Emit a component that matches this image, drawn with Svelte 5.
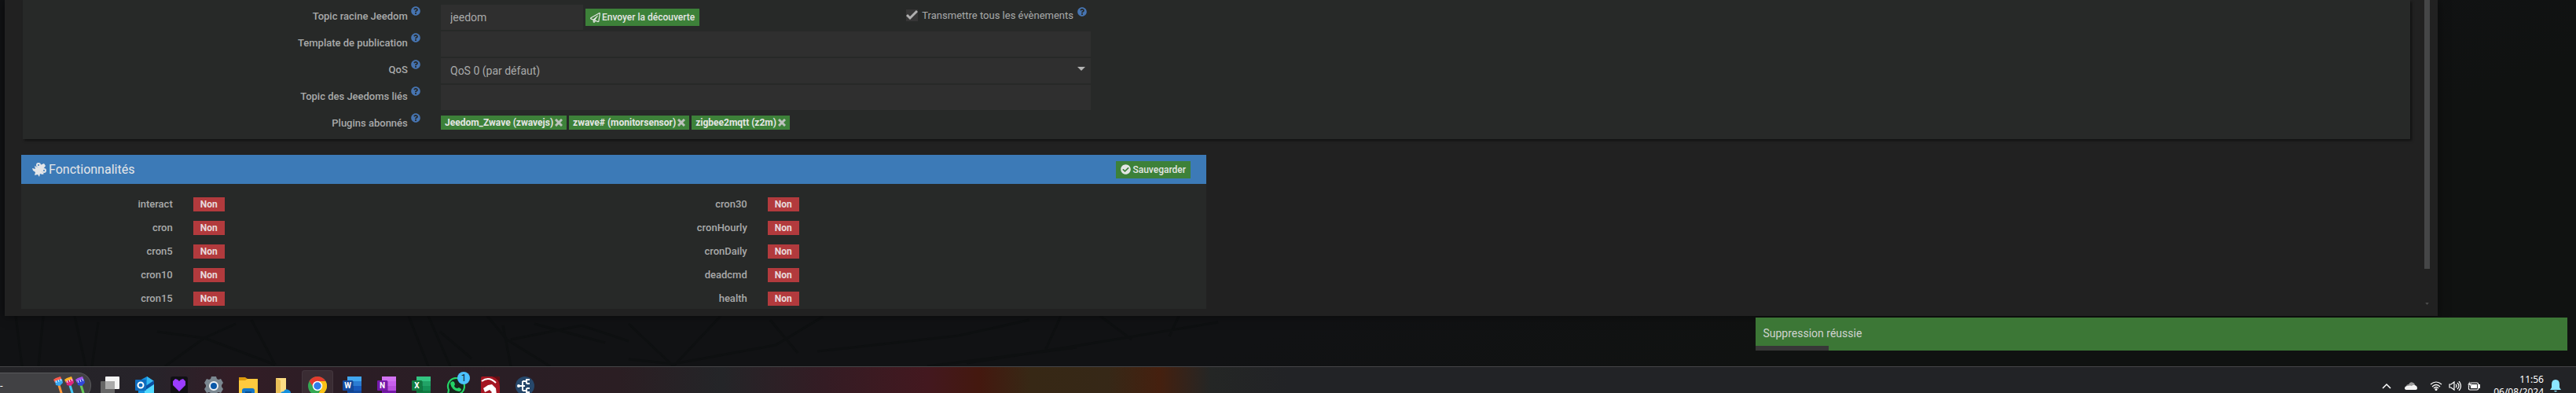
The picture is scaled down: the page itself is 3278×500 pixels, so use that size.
<script>
     let topic = $state('jeedom');
     let template = $state('');
     let qos = $state('0');
     let linkedTopic = $state('');
     let sendAll = $state(true);
     let plugins = $state(['Jeedom_Zwave (zwavejs)', 'zwave# (monitorsensor)', 'zigbee2mqtt (z2m)']);

     // One list per column of the "Fonctionnalités" panel.
     const features = [
          ['interact', 'cron', 'cron5', 'cron10', 'cron15'],
          ['cron30', 'cronHourly', 'cronDaily', 'deadcmd', 'health']
     ];

     const toastProgress = 9;

     function removePlugin(name) {
          plugins = plugins.filter((p) => p !== name);
     }
</script>

{#snippet help()}
     <svg class="help" viewBox="0 0 512 512" aria-hidden="true">
          <path d="M504 256c0 136.997-111.043 248-248 248S8 392.997 8 256C8 119.083 119.043 8 256 8s248 111.083 248 248zM262.655 90c-54.497 0-89.255 22.957-116.549 63.758-3.536 5.286-2.353 12.415 2.715 16.258l34.699 26.31c5.205 3.947 12.621 3.008 16.665-2.122 17.864-22.658 30.113-35.797 57.303-35.797 20.429 0 45.698 13.148 45.698 32.958 0 14.976-12.363 22.667-32.534 33.976C247.128 238.528 216 254.941 216 296v4c0 6.627 5.373 12 12 12h56c6.627 0 12-5.373 12-12v-1.333c0-28.462 83.186-29.647 83.186-106.667 0-58.002-60.165-102-116.531-102zM256 338c-25.365 0-46 20.635-46 46 0 25.364 20.635 46 46 46s46-20.636 46-46c0-25.365-20.635-46-46-46z" />
     </svg>
{/snippet}

{#snippet office(letter, base, dark, mid, light)}
     <svg viewBox="0 0 24 24" aria-hidden="true">
          <rect x="6" width="18" height="24" fill={base} />
          <rect x="6" width="18" height="6" fill={light} />
          <rect x="6" y="6" width="18" height="6" fill={mid} />
          <rect x="6" y="18" width="18" height="6" fill={dark} />
          <rect x="7" y="6" width="7" height="13" fill="#000" opacity="0.2" />
          <rect y="5" width="13" height="13" rx="1" fill={dark} />
          <text x="6.5" y="15" text-anchor="middle" font-size="10" font-weight="700" fill="#fff">{letter}</text>
     </svg>
{/snippet}

<div class="page">
     <main class="modal">
          <div class="content">
               <form class="config" onsubmit={(e) => e.preventDefault()}>
                    <div class="row">
                         <label class="name" for="topic">Topic racine Jeedom {@render help()}</label>
                         <div class="control">
                              <input id="topic" class="field short" type="text" bind:value={topic} />
                              <button class="btn" type="button">
                                   <svg class="icon" viewBox="0 0 512 512" aria-hidden="true">
                                        <path d="M440 6.500L24 246.400c-34.400 19.900-31.100 70.800 5.700 85.900L144 379.600V464c0 46.400 59.200 65.500 86.600 28.600l43.800-59.100 111.900 46.200c5.900 2.400 12.100 3.600 18.300 3.600 8.200 0 16.300-2.100 23.600-6.200 12.800-7.200 21.600-20 23.900-34.500l59.400-387.200c6.100-40.100-36.900-68.800-71.500-48.900zM192 464v-64.600l36.600 15.100L192 464zm212.600-28.700l-153.800-63.500L391 169.500c10.700-15.500-9.500-33.500-23.700-21.200L155.800 332.600 48 288 464 48l-59.400 387.300z" />
                                   </svg>
                                   Envoyer la découverte
                              </button>
                              <label class="check">
                                   <input type="checkbox" bind:checked={sendAll} />
                                   Transmettre tous les évènements {@render help()}
                              </label>
                         </div>
                    </div>
                    <div class="row">
                         <label class="name" for="template">Template de publication {@render help()}</label>
                         <div class="control">
                              <input id="template" class="field" type="text" bind:value={template} />
                         </div>
                    </div>
                    <div class="row">
                         <label class="name" for="qos">QoS {@render help()}</label>
                         <div class="control">
                              <select id="qos" class="field" bind:value={qos}>
                                   <option value="0">QoS 0 (par défaut)</option>
                                   <option value="1">QoS 1</option>
                                   <option value="2">QoS 2</option>
                              </select>
                         </div>
                    </div>
                    <div class="row">
                         <label class="name" for="linked">Topic des Jeedoms liés {@render help()}</label>
                         <div class="control">
                              <input id="linked" class="field" type="text" bind:value={linkedTopic} />
                         </div>
                    </div>
                    <div class="row">
                         <span class="name">Plugins abonnés {@render help()}</span>
                         <div class="control tags">
                              {#each plugins as plugin (plugin)}
                                   <span class="tag">
                                        {plugin}
                                        <button type="button" aria-label="Supprimer" onclick={() => removePlugin(plugin)}>
                                             <svg viewBox="0 0 10 10" aria-hidden="true"><path d="M1 1l8 8M9 1l-8 8" /></svg>
                                        </button>
                                   </span>
                              {/each}
                         </div>
                    </div>
               </form>

               <section class="panel">
                    <header>
                         <h3>
                              <svg class="puzzle" viewBox="0 0 18 18" aria-hidden="true">
                                   <path d="M0 7l4 1-1-4 4 2 3-3 5-2 2 3-3 4 2 1-4 2 3 3-2 1-3-1-1 4-2-3-4 1 1-4-3-2z" fill="#e4e6e8" />
                                   <circle cx="8" cy="3" r="2" />
                                   <circle cx="15" cy="10" r="2" />
                              </svg>
                              Fonctionnalités
                         </h3>
                         <button class="btn" type="button">
                              <svg class="icon" viewBox="0 0 512 512" aria-hidden="true">
                                   <path d="M504 256c0 136.967-111.033 248-248 248S8 392.967 8 256 119.033 8 256 8s248 111.033 248 248zM227.314 387.314l184-184c6.248-6.248 6.248-16.379 0-22.627l-22.627-22.627c-6.248-6.249-16.379-6.249-22.628 0L216 308.118l-70.059-70.059c-6.248-6.248-16.379-6.248-22.628 0l-22.627 22.627c-6.248 6.248-6.248 16.379 0 22.627l104 104c6.249 6.249 16.379 6.249 22.628.001z" />
                              </svg>
                              Sauvegarder
                         </button>
                    </header>
                    <div class="features">
                         {#each features as column}
                              <dl>
                                   {#each column as feature}
                                        <div class="feature">
                                             <dt>{feature}</dt>
                                             <dd><span class="badge">Non</span></dd>
                                        </div>
                                   {/each}
                              </dl>
                         {/each}
                    </div>
               </section>
          </div>
          <div class="scrollbar" aria-hidden="true">
               <div class="thumb"></div>
               <svg viewBox="0 0 6 4"><path d="M0 0h6L3 4z" /></svg>
          </div>
     </main>

     <div class="wallpaper" aria-hidden="true">
          <svg viewBox="0 0 3278 64" preserveAspectRatio="none">
               <path d="M20 0l8 64M55 0l-6 64M95 0l14 64M125 8l-8 56M200 20l60 8 40-18M210 64l50-36 90 34M320 5l30 57M520 0l25 64M545 0l28 64M560 20l40 34M620 0l25 30 55 34M640 12l10 52M650 30l90-18 60 20M680 10l90 24M800 10l57 54 60-64M800 55l57 6 130-24 60-36M980 5l35 42M1040 45l180-20 90-20M1230 60l140-22 180-30M1180 64l190-24M1350 0l-20 44M1400 0l40 30M1500 0l-12 26" />
          </svg>
     </div>

     <footer class="taskbar">
          <div class="search" aria-hidden="true">
               <span>-</span>
               <svg viewBox="0 0 42 24">
                    {#each [['#ff5b4d', '#38a7f0', '#ff9638'], ['#ffb327', '#e0257d', '#44c7f5'], ['#a457f0', '#3046d8', '#66c95a']] as [tip, band, handle], i}
                         <g transform="translate({i * 14} 0)">
                              <path d="M7 11l4 13" stroke={handle} stroke-width="3" />
                              <path d="M0 4l3-2 6-2 2 5-9 3z" fill={tip} />
                              <path d="M2 6l9-3 1 5-4 4-5-1z" fill={band} />
                              <path d="M3 5l1 3M6 4l1 3M9 3l1 3" stroke="#dff3ff" />
                         </g>
                    {/each}
               </svg>
          </div>

          <nav class="apps" aria-label="Applications">
               <button type="button" aria-label="Bureau">
                    <svg viewBox="0 0 24 24">
                         <rect x="6" width="18" height="16" rx="1" fill="#f4f4f4" />
                         <rect y="6" width="18" height="16" rx="1" fill="#666" />
                         <rect x="6" y="6" width="12" height="10" fill="#aaa" />
                    </svg>
               </button>
               <button type="button" aria-label="Outlook">
                    <svg viewBox="0 0 24 24">
                         <path d="M4 6L15 0l9 6v18H4z" fill="#1490df" />
                         <path d="M15 0l9 6-9 7z" fill="#35b8f1" />
                         <path d="M12 13L24 5v5l-10 7z" fill="#0b4fa0" />
                         <path d="M12 18l12-8v14H12z" fill="#50d9ff" />
                         <rect y="4" width="14" height="14" rx="1" fill="#0f6cbd" />
                         <circle cx="7" cy="11" r="3.500" fill="none" stroke="#fff" stroke-width="2" />
                    </svg>
               </button>
               <button type="button" aria-label="Coeur">
                    <svg viewBox="0 0 24 24">
                         <rect x="1" width="22" height="24" rx="3" fill="#111015" />
                         <path d="M12 19L4 11V6l3-3 3 1 2 2 2-2 3-1 3 3v5z" fill="#9b3cff" />
                    </svg>
               </button>
               <button type="button" aria-label="Paramètres">
                    <svg viewBox="0 0 24 24">
                         <path d="M9 0h6l1 3 2 1 3-1 3 5-2 3v2l2 3-3 5-3-1-2 1-1 3H9l-1-3-2-1-3 1-3-5 2-3v-2L0 8l3-5 3 1 2-1z" fill="#7b8790" />
                         <circle cx="12" cy="12" r="5" fill="#0a58a8" stroke="#eef2f5" stroke-width="2" />
                    </svg>
               </button>
               <button type="button" aria-label="Explorateur">
                    <svg viewBox="0 0 24 24">
                         <path d="M0 1h8l3 2v4H0z" fill="#dd9a0c" />
                         <path d="M0 5h8l3-2h13v21H0z" fill="#ffca3e" />
                         <path d="M4 24v-6q0-3 3-3h10q3 0 3 3v6z" fill="#1577c8" />
                         <path d="M8 20h8" stroke="#0b4f93" stroke-width="2" />
                    </svg>
               </button>
               <button type="button" aria-label="OneDrive">
                    <svg viewBox="0 0 24 24">
                         <path d="M3 2h13v22H3z" fill="#fbdc84" />
                         <path d="M3 2l6 3v19H3z" fill="#e9bf58" />
                         <path d="M9 24q-1-5 4-5 2-4 6-2 3 1 3 4 2 1 1 3z" fill="#1490df" />
                    </svg>
               </button>
               <button class="active" type="button" aria-label="Chrome">
                    <svg viewBox="0 0 24 24">
                         <circle cx="12" cy="12" r="12" fill="#34a853" />
                         <path d="M1.600 6A12 12 0 0 1 22.400 6H12l-5 8z" fill="#e33b2e" />
                         <path d="M12 6h10.400A12 12 0 0 1 12 24l5-9z" fill="#fbc116" />
                         <circle cx="12" cy="12" r="5.500" fill="#2f7de9" stroke="#fff" stroke-width="1.500" />
                    </svg>
               </button>
               <button type="button" aria-label="Word">{@render office('W', '#185abd', '#134a9e', '#2b7cd3', '#41a5ee')}</button>
               <button type="button" aria-label="OneNote">{@render office('N', '#b950df', '#7719aa', '#c85fee', '#d272f2')}</button>
               <button type="button" aria-label="Excel">{@render office('X', '#159257', '#107c41', '#21a366', '#33c481')}</button>
               <button class="chat" type="button" aria-label="WhatsApp">
                    <svg viewBox="0 0 24 24">
                         <path d="M2 23l1-6A10.500 10.500 0 1 1 8 22z" fill="#16251d" stroke="#25d366" stroke-width="2.200" />
                         <path d="M8 6l2 1 1 3-1 2q1 3 4 3l2-1 3 2q0 3-3 3-9-1-11-10 0-2 3-3z" fill="#25d366" />
                    </svg>
                    <span class="count">1</span>
               </button>
               <button type="button" aria-label="Dragon">
                    <svg viewBox="0 0 24 24">
                         <rect width="24" height="24" rx="2" fill="#a51622" />
                         <path d="M0 0h14q10 3 10 13v-11q0-2-2-2z" fill="#5b0e14" />
                         <path d="M1 6Q10-1 19 8" fill="none" stroke="#fff" stroke-width="2" />
                         <path d="M3 15l6-4 5-1 5 5 1 9H10l4-4-3-3-6 3z" fill="#fff" />
                    </svg>
               </button>
               <button type="button" aria-label="MQTT">
                    <svg viewBox="0 0 24 24">
                         <circle cx="12" cy="12" r="12" fill="#27486b" />
                         <path d="M4 12h8M9 6v12M9 6h4M9 18h4M14 3v6M14 15v6M14 4h4M14 9h4M14 15h4M14 20h4" fill="none" stroke="#fff" stroke-width="2" />
                         <circle cx="4" cy="12" r="2" fill="#fff" />
                    </svg>
               </button>
          </nav>

          <div class="tray">
               <svg class="chevron" viewBox="0 0 12 8" aria-hidden="true"><path d="M1 7l5-5 5 5" fill="none" stroke="#fff" stroke-width="1.500" /></svg>
               <svg class="cloud" viewBox="0 0 16 10" aria-hidden="true">
                    <path d="M2 6q0-3 3-3 2-4 6-2 2 1 2 3l-7 4H2z" fill="#999" />
                    <path d="M3 10q-3 0-3-2 0-3 4-3 3-1 5 0 2-2 4-1 3 1 3 4 0 2-2 2z" fill="#f3f3f3" />
               </svg>
               <svg class="status" viewBox="0 0 16 12" aria-hidden="true">
                    <path d="M1 4q7-6 14 0M3 7q5-5 10 0M5 9q3-3 6 0" fill="none" stroke="#fff" stroke-width="1.200" />
                    <circle cx="8" cy="10.500" r="1.500" fill="#fff" />
               </svg>
               <svg class="status" viewBox="0 0 16 12" aria-hidden="true">
                    <path d="M1 4h2l4-3v10L3 8H1zM9 4q2 2 0 4M11 2q4 4 0 8M13 0q5 6 0 12" fill="none" stroke="#fff" stroke-width="1.200" />
               </svg>
               <svg class="status" viewBox="0 0 16 12" aria-hidden="true">
                    <rect x="1.500" y="2" width="12" height="9" rx="1.500" fill="none" stroke="#fff" stroke-width="1.200" />
                    <rect x="4" y="4" width="8" height="5" fill="#fff" />
                    <path d="M14 4h2v5h-2z" fill="#fff" />
                    <path d="M3 0L0 5h3L2 8l4-5H3z" fill="#fff" stroke="#222326" stroke-width="0.500" />
               </svg>
               <div class="clock">
                    <time>11:56</time>
                    <time>06/08/2024</time>
               </div>
               <svg class="bell" viewBox="0 0 14 16" aria-hidden="true">
                    <path d="M7 0q5 0 5 6v4l2 3H0l2-3V6q0-6 5-6zM5 14h4q-2 3-4 0z" fill="#8ce6ff" />
               </svg>
          </div>
     </footer>

     <div class="toast" role="status">
          <p>Suppression réussie</p>
          <div class="progress" style={`width: ${toastProgress}%;`}></div>
     </div>
</div>

<style>
     :global(body) {
          background: #111213;
     }

     .page {
          height: 100vh;
          overflow: hidden;
          display: flex;
          flex-direction: column;

          font-family: Roboto, "Noto Sans", sans-serif;
          font-size: 13px;
          color: #a9aaaa;
          background: linear-gradient(160deg, #111214 60%, #101211 75%);
     }

     .modal {
          flex: none;
          display: flex;
          gap: 18px;
          margin: 0 176px 0 6px;
          padding: 0 10px 9px 21px;
          background: #212121;
          box-shadow: 0 0 12px rgba(0, 0, 0, 0.5);
          z-index: 1;
     }

     .content {
          flex: 1;
          min-width: 0;
     }

     .config {
          margin: 0 0 20px 2px;
          padding: 5px 0 2px;
          background: #272928;
          box-shadow: 2px 2px 3px rgba(0, 0, 0, 0.5);
     }

     .row {
          display: grid;
          grid-template-columns: 519fr 853fr 1666fr;
          align-items: center;
          min-height: 34px;
     }

     .name {
          padding-right: 13px;
          padding-bottom: 6px;
          text-align: right;
          font-weight: 500;
          line-height: 18px;
          white-space: nowrap;
     }

     .help {
          width: 12px;
          height: 12px;
          margin-left: 1px;
          vertical-align: 5px;
          fill: #4674b1;
     }

     .control {
          display: flex;
          align-items: center;
          gap: 3px;
          padding: 0 13px;
     }

     .tags {
          padding-bottom: 4px;
     }

     .field {
          box-sizing: border-box;
          width: 100%;
          height: 32px;
          padding: 0 12px;
          border: none;
          border-radius: 0;
          appearance: none;
          font: inherit;
          font-size: 14px;
          color: #a9aaaa;
          background-color: #2f2f2f;
     }

     select.field {
          background-image: url("data:image/svg+xml,%3Csvg xmlns='http://www.w3.org/2000/svg' viewBox='0 0 10 5'%3E%3Cpath d='M0 0h10L5 5z' fill='%23b4b4b4'/%3E%3C/svg%3E");
          background-repeat: no-repeat;
          background-position: right 7px top 11px;
          background-size: 10px 5px;
     }

     .short {
          width: 181px;
     }

     .btn {
          display: flex;
          align-items: center;
          gap: 2px;
          height: 22px;
          padding: 0 6px;
          border: none;
          font: inherit;
          font-size: 12px;
          font-weight: 500;
          white-space: nowrap;
          color: #e4e6e4;
          background: #3d8139;
          cursor: pointer;
     }

     .icon {
          width: 13px;
          height: 13px;
          fill: currentColor;
     }

     .check {
          display: flex;
          align-items: center;
          gap: 5px;
          margin-left: auto;
          padding: 0 5px 5px 0;
          white-space: nowrap;
     }

     .check .help {
          margin: 0 0 10px;
     }

     .check input {
          width: 15px;
          height: 15px;
          margin: 0;
          appearance: none;
          background: #363636;
     }

     .check input:checked {
          background: #363636 url("data:image/svg+xml,%3Csvg xmlns='http://www.w3.org/2000/svg' viewBox='0 0 15 15'%3E%3Cpath d='M1 7l4 4 9-9' fill='none' stroke='%23b0b0b0' stroke-width='3'/%3E%3C/svg%3E");
     }

     .tag {
          display: flex;
          align-items: center;
          gap: 2px;
          height: 18px;
          padding: 0 5px;
          font-size: 12px;
          font-weight: 700;
          white-space: nowrap;
          color: #e4e6e4;
          background: #3d8139;
     }

     .tag button {
          display: flex;
          padding: 0;
          border: none;
          background: none;
          cursor: pointer;
     }

     .tag svg {
          width: 10px;
          height: 10px;
          fill: none;
          stroke: #bdc3bd;
          stroke-width: 3;
     }

     .panel {
          width: 1508px;
          max-width: 100%;
          background: #272928;
     }

     .panel header {
          display: flex;
          align-items: center;
          justify-content: space-between;
          height: 37px;
          padding: 0 20px 0 14px;
          background: #3c7ab7;
     }

     h3 {
          display: flex;
          align-items: center;
          gap: 3px;
          margin: 0;
          font-size: 16px;
          font-weight: 400;
          color: #e4e6e8;
     }

     .puzzle {
          width: 18px;
          height: 18px;
          fill: #3c7ab7;
     }

     .puzzle circle {
          stroke: #e4e6e8;
          stroke-width: 2;
     }

     .features {
          display: grid;
          grid-template-columns: 1fr 1fr;
          padding: 13px 23px 0;
     }

     dl {
          display: grid;
          gap: 4px;
          margin: 0;
     }

     .feature {
          display: grid;
          grid-template-columns: 1fr 3fr;
          align-items: center;
          height: 26px;
     }

     dt {
          padding-right: 13px;
          padding-bottom: 2px;
          text-align: right;
          font-weight: 500;
     }

     dd {
          margin: 0;
          padding-left: 13px;
     }

     .badge {
          display: block;
          width: 40px;
          height: 18px;
          line-height: 18px;
          text-align: center;
          font-size: 12px;
          font-weight: 700;
          color: #e8dcdc;
          background: #b23a3d;
     }

     .scrollbar {
          flex: none;
          display: flex;
          flex-direction: column;
          align-items: center;
          width: 7px;
     }

     .thumb {
          width: 100%;
          height: 87%;
          background: #454647;
     }

     .scrollbar svg {
          width: 5px;
          height: 3px;
          margin: auto 0 5px;
          fill: #4c4c4c;
     }

     .wallpaper {
          flex: none;
          height: 64px;
     }

     .wallpaper svg {
          display: block;
          width: 100%;
          height: 100%;
          fill: none;
          stroke: #0e1011;
          stroke-width: 3;
     }

     .taskbar {
          flex: none;
          display: flex;
          align-items: center;
          height: 47px;
          border-top: 1px solid #464648;
          background: linear-gradient(90deg, #242427 0, #27232a 6%, #331d26 9%, #2b1d25 13%, #2a1e25 20%, #2b1e23 24%, #242528 28%, #341c24 32%, #43181f 36%, #44180f 38%, #372815 40%, #362817 43%, #45200f 45%, #242625 47%, #222326 50%, #222326 100%);
     }

     .search {
          box-sizing: border-box;
          display: flex;
          align-items: center;
          justify-content: space-between;
          width: 116px;
          height: 33px;
          margin-right: 4px;
          padding-right: 5px;
          border: 1px solid #58585b;
          border-left: none;
          border-radius: 0 16px 16px 0;
          color: #fff;
          background: #414144;
     }

     .search svg {
          width: 42px;
          height: 24px;
     }

     .apps {
          display: flex;
          gap: 4px;
     }

     .apps button {
          position: relative;
          display: flex;
          align-items: center;
          justify-content: center;
          width: 40px;
          height: 40px;
          padding: 0;
          border: none;
          border-radius: 4px;
          background: none;
          font-family: inherit;
     }

     .apps .active {
          background: #3a2c33;
          box-shadow: inset 0 0 0 1px #43363d;
     }

     .apps svg {
          width: 24px;
          height: 24px;
     }

     .count {
          position: absolute;
          top: 2px;
          right: 2px;
          width: 16px;
          height: 16px;
          line-height: 16px;
          border-radius: 50%;
          font-size: 12px;
          text-align: center;
          color: #12222c;
          background: #4cc2ff;
     }

     .tray {
          display: flex;
          align-items: center;
          gap: 8px;
          margin-left: auto;
          padding-right: 19px;
     }

     .chevron {
          width: 12px;
          height: 8px;
          margin-right: 9px;
     }

     .cloud {
          width: 16px;
          height: 10px;
          margin-right: 8px;
     }

     .status {
          width: 16px;
          height: 12px;
     }

     .clock {
          display: flex;
          flex-direction: column;
          margin-left: 9px;
          font-family: "Noto Sans", sans-serif;
          font-size: 12px;
          line-height: 16px;
          text-align: right;
          color: #fff;
     }

     .bell {
          width: 14px;
          height: 16px;
     }

     /* Notification floating over the page, above the taskbar */
     .toast {
          position: fixed;
          right: 11px;
          bottom: 54px;
          width: 31.5%;
          z-index: 5;
          color: #d0d3d0;
          background: #3c7736;
     }

     .toast p {
          margin: 0;
          padding: 8px 9px 4px;
          font-size: 14px;
          line-height: 24px;
     }

     .progress {
          height: 6px;
          background: #373737;
     }
</style>
